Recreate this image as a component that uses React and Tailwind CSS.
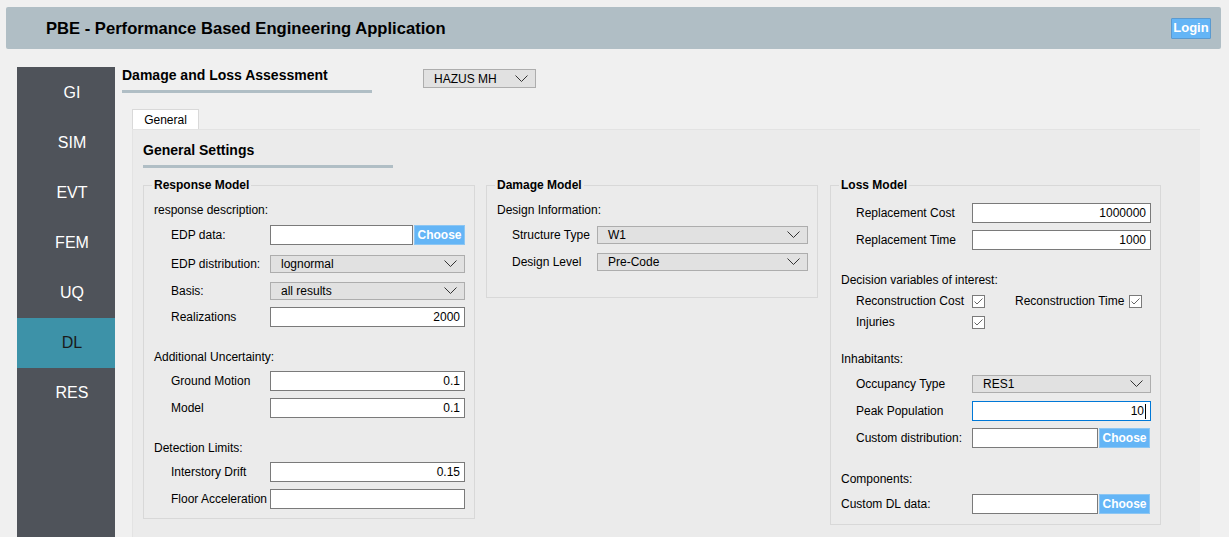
import React from 'react';

const FONT = { fontFamily: '"Liberation Sans", Arial, sans-serif' };

function Chevron() {
    return (
        <svg width="13" height="8" viewBox="0 0 13 8" className="shrink-0">
            <polyline points="0.5,0.5 6.5,6.5 12.5,0.5" fill="none" stroke="#333" strokeWidth="1" />
        </svg>
    );
}

function Select({ value, width, className = '' }) {
    return (
        <div
            className={`h-[18px] flex items-center justify-between pl-[10px] pr-[7px] bg-[#e1e1e1] border border-[#adadad] text-[12px] text-black ${className}`}
            style={{ width }}
        >
            <span>{value}</span>
            <Chevron />
        </div>
    );
}

function TextBox({ value = '', width, focused = false }) {
    return (
        <div
            className={`h-[20px] flex items-center justify-end pr-[4px] bg-white border text-[12px] text-black ${focused ? 'border-[#0078d7]' : 'border-[#7a7a7a]'}`}
            style={{ width }}
        >
            <span>{value}</span>
            {focused && <span className="w-px h-[15px] bg-black ml-px" />}
        </div>
    );
}

function ChooseButton() {
    return (
        <button className="h-[20px] w-[51px] ml-[1px] bg-[#64b5f6] border border-[#8cc6f3] text-white text-[12px] font-bold flex items-center justify-center">
            Choose
        </button>
    );
}

function Check() {
    return (
        <div className="w-[13px] h-[13px] border border-[#7a7a7a] bg-white flex items-center justify-center">
            <svg width="9" height="7" viewBox="0 0 9 7">
                <polyline points="0.5,3.5 3,6 8.5,0.5" fill="none" stroke="#666" strokeWidth="1" />
            </svg>
        </div>
    );
}

function Row({ label, labelW, indent = 0, mt = 0, children }) {
    return (
        <div className="flex items-center h-[20px]" style={{ marginTop: mt, paddingLeft: indent }}>
            <div className="text-[12px] text-black shrink-0" style={{ width: labelW }}>{label}</div>
            {children}
        </div>
    );
}

function Heading({ text, mt }) {
    return (
        <div className="h-[20px] flex items-center text-[12px] text-black" style={{ marginTop: mt }}>{text}</div>
    );
}

function Group({ title, width, children, className = '' }) {
    return (
        <fieldset className={`border border-[#d8d8d8] pl-[10px] ${className}`} style={{ width }}>
            <legend className="-ml-[2px] px-[2px] text-[12px] font-bold text-black leading-[14px]">{title}</legend>
            {children}
        </fieldset>
    );
}

const navItems = ['GI', 'SIM', 'EVT', 'FEM', 'UQ', 'DL', 'RES'];

export default function App() {
    return (
        <div className="w-[1229px] h-[537px] overflow-hidden bg-[#f0f0f0] flex flex-col" style={FONT}>
            {/* Header */}
            <div className="mt-[7px] ml-[6px] w-[1215px] h-[42px] shrink-0 bg-[#b0bec5] rounded-[2px] flex items-center justify-between pl-[40px] pr-[10px]">
                <h1 className="text-[16.6px] font-bold text-black pt-[3px]">PBE - Performance Based Engineering Application</h1>
                <button className="h-[21px] w-[40px] bg-[#64b5f6] border border-[#5a9ad0] rounded-[1px] text-white text-[13px] font-bold flex items-center justify-center">
                    Login
                </button>
            </div>

            <div className="flex flex-1 mt-[18px] min-h-0">
                {/* Sidebar */}
                <div className="ml-[17px] w-[98px] bg-[#4f535a] pt-px shrink-0">
                    {navItems.map(item => (
                        <div
                            key={item}
                            className={`h-[50px] flex items-center justify-center pl-[12px] text-[16px] ${item === 'DL' ? 'bg-[#3d92a8] text-[#1a1a1a]' : 'text-white'}`}
                        >
                            {item}
                        </div>
                    ))}
                </div>

                {/* Main */}
                <div className="ml-[7px] flex flex-col flex-1 min-h-0">
                    <div className="flex items-start">
                        <div className="w-[250px]">
                            <div className="h-[17px] text-[14px] font-bold text-black leading-[17px]">Damage and Loss Assessment</div>
                            <div className="mt-[6px] h-[3px] bg-[#b0bec5]" />
                        </div>
                        <Select value="HAZUS MH" width={113} className="ml-[51px] mt-[2px] h-[19px]" />
                    </div>

                    {/* Tabs */}
                    <div className="mt-[16px] ml-[10px] flex">
                        <div className="w-[67px] h-[20px] bg-white border border-b-0 border-[#d9d9d9] flex items-center justify-center text-[12px] text-black">
                            General
                        </div>
                    </div>

                    <div className="ml-[10px] w-[1068px] flex-1 bg-[#ebebeb] border-l border-t border-[#e3e3e3] pl-[10px] pt-[12px]">
                        <div className="w-[250px]">
                            <div className="h-[17px] text-[14px] font-bold text-black leading-[17px]">General Settings</div>
                            <div className="mt-[6px] h-[3px] bg-[#b0bec5]" />
                        </div>

                        <div className="flex items-start mt-[10px]">
                            {/* Response Model */}
                            <Group title="Response Model" width={332} className="pb-[9px]">
                                <Heading text="response description:" mt={8} />
                                <Row label="EDP data:" labelW={99} indent={17} mt={5}>
                                    <TextBox width={143} />
                                    <ChooseButton />
                                </Row>
                                <Row label="EDP distribution:" labelW={99} indent={17} mt={9}>
                                    <Select value="lognormal" width={195} />
                                </Row>
                                <Row label="Basis:" labelW={99} indent={17} mt={7}>
                                    <Select value="all results" width={195} />
                                </Row>
                                <Row label="Realizations" labelW={99} indent={17} mt={6}>
                                    <TextBox value="2000" width={195} />
                                </Row>
                                <Heading text="Additional Uncertainty:" mt={20} />
                                <Row label="Ground Motion" labelW={99} indent={17} mt={4}>
                                    <TextBox value="0.1" width={195} />
                                </Row>
                                <Row label="Model" labelW={99} indent={17} mt={7}>
                                    <TextBox value="0.1" width={195} />
                                </Row>
                                <Heading text="Detection Limits:" mt={20} />
                                <Row label="Interstory Drift" labelW={99} indent={17} mt={4}>
                                    <TextBox value="0.15" width={195} />
                                </Row>
                                <Row label="Floor Acceleration" labelW={99} indent={17} mt={7}>
                                    <TextBox width={195} />
                                </Row>
                            </Group>

                            {/* Damage Model */}
                            <Group title="Damage Model" width={332} className="ml-[11px] pb-[25px]">
                                <Heading text="Design Information:" mt={8} />
                                <Row label="Structure Type" labelW={85} indent={15} mt={5}>
                                    <Select value="W1" width={211} />
                                </Row>
                                <Row label="Design Level" labelW={85} indent={15} mt={7}>
                                    <Select value="Pre-Code" width={211} />
                                </Row>
                            </Group>

                            {/* Loss Model */}
                            <Group title="Loss Model" width={331} className="ml-[12px] pb-[10px]">
                                <Row label="Replacement Cost" labelW={116} indent={15} mt={11}>
                                    <TextBox value="1000000" width={179} />
                                </Row>
                                <Row label="Replacement Time" labelW={116} indent={15} mt={7}>
                                    <TextBox value="1000" width={179} />
                                </Row>
                                <Heading text="Decision variables of interest:" mt={20} />
                                <Row label="Reconstruction Cost" labelW={116} indent={15} mt={1}>
                                    <Check />
                                    <span className="ml-[30px] w-[114px] text-[12px] text-black">Reconstruction Time</span>
                                    <Check />
                                </Row>
                                <Row label="Injuries" labelW={116} indent={15} mt={1}>
                                    <Check />
                                </Row>
                                <Heading text="Inhabitants:" mt={17} />
                                <Row label="Occupancy Type" labelW={116} indent={15} mt={5}>
                                    <Select value="RES1" width={179} />
                                </Row>
                                <Row label="Peak Population" labelW={116} indent={15} mt={7}>
                                    <TextBox value="10" width={179} focused />
                                </Row>
                                <Row label="Custom distribution:" labelW={116} indent={15} mt={7}>
                                    <TextBox width={126} />
                                    <ChooseButton />
                                </Row>
                                <Heading text="Components:" mt={21} />
                                <Row label="Custom DL data:" labelW={131} mt={5}>
                                    <TextBox width={126} />
                                    <ChooseButton />
                                </Row>
                            </Group>
                        </div>
                    </div>
                </div>
            </div>
        </div>
    );
}
